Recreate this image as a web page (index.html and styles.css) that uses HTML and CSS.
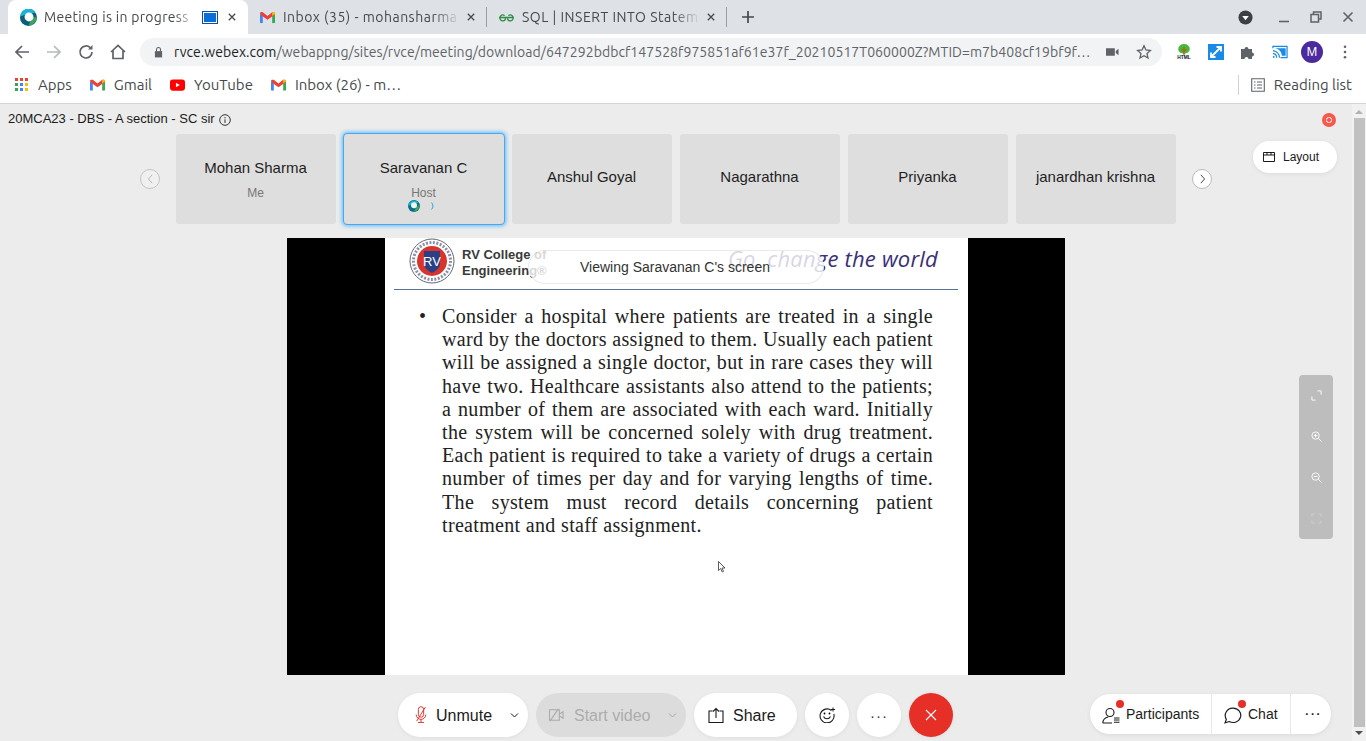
FILE: index.html
```html
<!DOCTYPE html>
<html lang="en">
<head>
  <meta charset="UTF-8" />
  <title>Meeting is in progress</title>
  <link rel="stylesheet" href="styles.css">
</head>
<body>
  <!-- browser chrome -->
  <div class="tabstrip">
    <div class="tab active">
      <svg class="favicon webex" viewBox="0 0 16 16"><circle cx="8" cy="8" r="8" fill="#0b5f7a"/><path d="M.5 7a7.5 7.5 0 0 1 14-3.500L8 4z" fill="#16b6dc"/><path d="M8 15.500A7.5 7.500 0 0 0 15.500 7L11 9z" fill="#3fa35a"/><circle cx="8.500" cy="7.500" r="4.200" fill="#fff"/></svg>
      <span class="tab-title">Meeting is in progress</span>
      <span class="cast-box"></span>
      <svg class="tab-close" viewBox="0 0 10 10"><path d="M1 1l8 8M9 1l-8 8"/></svg>
    </div>
    <div class="tab">
      <svg class="favicon" viewBox="0 0 16 12"><use href="#gmail"/></svg>
      <span class="tab-title">Inbox (35) - mohansharma</span>
      <svg class="tab-close" viewBox="0 0 10 10"><path d="M1 1l8 8M9 1l-8 8"/></svg>
    </div>
    <div class="tab-sep"></div>
    <div class="tab">
      <svg class="favicon" viewBox="0 0 16 10"><path d="M0 5h16M1 5a3 3 0 0 0 6 1M15 5a3 3 0 0 1-6 1M1 5a3 3 0 0 1 5-2M15 5a3 3 0 0 0-5-2" fill="none" stroke="#2f8d46" stroke-width="1.4"/></svg>
      <span class="tab-title">SQL | INSERT INTO Statem</span>
      <svg class="tab-close" viewBox="0 0 10 10"><path d="M1 1l8 8M9 1l-8 8"/></svg>
    </div>
    <div class="tab-sep"></div>
    <svg class="new-tab" viewBox="0 0 12 12"><path d="M6 0v12M0 6h12"/></svg>
    <div class="window-btns">
      <svg class="tabsearch" viewBox="0 0 16 16"><circle cx="8" cy="8" r="7.5" fill="#3c4043"/><path d="M4.5 6.5h7L8 11z" fill="#fff"/></svg>
      <svg class="winbtn" viewBox="0 0 12 12"><path d="M1 10.5h10" stroke-width="1.6"/></svg>
      <svg class="winbtn" viewBox="0 0 12 12"><path d="M3.5 3V1H11v7H8.500M1 3.500h7.500V11H1z" stroke-width="1.5"/></svg>
      <svg class="winbtn" viewBox="0 0 12 12"><path d="M1.500 1.500l9 9M10.500 1.500l-9 9" stroke-width="1.6"/></svg>
    </div>
  </div>

  <div class="toolbar">
    <svg class="nav-icon" viewBox="0 0 16 16"><path d="M15 8H2M8 2L2 8l6 6"/></svg>
    <svg class="nav-icon off" viewBox="0 0 16 16"><path d="M1 8h13M8 2l6 6-6 6"/></svg>
    <svg class="nav-icon" viewBox="0 0 16 16"><path d="M14 8a6 6 0 1 1-1.800-4.300"/><path d="M14.500 1v4.500H10" fill="#5f6368" stroke="none"/></svg>
    <svg class="nav-icon" viewBox="0 0 16 16"><path d="M1 8l7-6.500L15 8M3 6.500V14.500h10V6.500"/></svg>
    <div class="omnibox">
      <svg class="lock" viewBox="0 0 10 12"><path d="M1 5h8v7H1z" fill="#5f6368"/><path d="M2.800 5V3.200a2.200 2.200 0 0 1 4.400 0V5" fill="none" stroke="#5f6368" stroke-width="1.2"/></svg>
      <div class="url"><b>rvce.webex.com</b>/webappng/sites/rvce/meeting/download/647292bdbcf147528f975851af61e37f_20210517T060000Z?MTID=m7b408cf19bf9f…</div>
      <svg class="omni-cam" viewBox="0 0 14 10"><path d="M0 1h9.500v8H0zM10.500 4l3-2.500v7l-3-2.500z" fill="#5f6368"/></svg>
      <svg class="omni-star" viewBox="0 0 16 16"><path d="M8 1.800l1.900 4.200 4.500.5-3.400 3 1 4.500L8 11.700 4 14l1-4.500-3.400-3 4.500-.5z"/></svg>
    </div>
    <div class="ext-icons">
      <svg class="ext" viewBox="0 0 18 18"><ellipse cx="9" cy="5.500" rx="6.500" ry="5.500" fill="#47b83a"/><path d="M9 3v10M6 6l3 2 3-2" stroke="#a8641c" stroke-width="1.4" fill="none"/><text x="9" y="17" class="html-text" text-anchor="middle">HTML</text></svg>
      <svg class="ext" viewBox="0 0 16 16"><path d="M0 0h16v16H0z" fill="#1a8ae8"/><path d="M3 13L13 3M8.500 3H13v4.500M3 8.500V13h4.500" fill="none" stroke="#fff" stroke-width="1.8"/></svg>
      <svg class="ext" viewBox="0 0 16 16"><path d="M1 5h3.500a2 2 0 0 1 4 0H12v3.500a2 2 0 0 1 0 4V15H8.500a2 2 0 0 0-4 0H1z" fill="#5f6368"/></svg>
      <svg class="ext" viewBox="0 0 17 14"><path d="M1 3V1h15v12H9M1 5.500a8 8 0 0 1 7 7.500M1 8.500a4.800 4.800 0 0 1 4 4.500" fill="none" stroke="#1a8ae8" stroke-width="1.3"/><path d="M1 11a2 2 0 0 1 2 2H1zM3.500 3h11v8h-4a9 9 0 0 0-7-8z" fill="#1a8ae8"/></svg>
      <span class="avatar">M</span>
      <svg class="menu-dots" viewBox="0 0 4 16"><circle cx="2" cy="2" r="1.5"/><circle cx="2" cy="8" r="1.5"/><circle cx="2" cy="14" r="1.5"/></svg>
    </div>
  </div>

  <div class="bookmarks">
    <div class="bm">
      <svg class="bm-icon apps" viewBox="0 0 13 13"><path fill="#ea4335" d="M0 0h3v3H0zM5 0h3v3H5zM10 0h3v3h-3z"/><path fill="#34a853" d="M0 5h3v3H0zM0 10h3v3H0z"/><path fill="#4285f4" d="M5 5h3v3H5zM5 10h3v3H5z"/><path fill="#fbbc05" d="M10 5h3v3h-3zM10 10h3v3h-3z"/></svg>
      Apps
    </div>
    <div class="bm"><svg class="bm-icon" viewBox="0 0 16 12"><use href="#gmail"/></svg>Gmail</div>
    <div class="bm"><svg class="bm-icon" viewBox="0 0 16 12"><rect width="16" height="12" rx="3" fill="#f00"/><path d="M6.300 3.500v5L10.500 6z" fill="#fff"/></svg>YouTube</div>
    <div class="bm"><svg class="bm-icon" viewBox="0 0 16 12"><use href="#gmail"/></svg>Inbox (26) - m…</div>
    <div class="reading">
      <svg class="reading-icon" viewBox="0 0 14 14"><path d="M.7.700h12.600v12.600H.7zM3 4h1.500M6 4h5M3 7h1.500M6 7h5M3 10h1.500M6 10h5"/></svg>
      Reading list
    </div>
  </div>

  <!-- webex meeting -->
  <div class="viewport">
    <div class="meeting">
      <div class="meeting-title">20MCA23 - DBS - A section - SC sir
        <svg class="info" viewBox="0 0 12 12"><circle cx="6" cy="6" r="5.300"/><path d="M6 5.300V9M6 3v1.300"/></svg>
      </div>
      <span class="rec-dot"></span>

      <div class="strip">
        <span class="arrow off"><svg viewBox="0 0 8 12"><path d="M6 1L1.500 6 6 11"/></svg></span>
        <div class="tile"><span class="name">Mohan Sharma</span><span class="role">Me</span></div>
        <div class="tile host">
          <span class="name">Saravanan C</span><span class="role">Host</span>
          <span class="host-icons">
            <svg viewBox="0 0 12 12" width="12" height="12"><circle cx="6" cy="6" r="6" fill="#0a6f8c"/><path d="M.5 6a5.500 5.500 0 0 1 10-3L6 3z" fill="#17b4d6"/><path d="M6 11.500A5.500 5.500 0 0 0 11.500 5L8 7z" fill="#3fa35a"/><circle cx="6" cy="5.300" r="3" fill="#eef6ee"/></svg>
            <svg viewBox="0 0 3 8" width="3" height="8"><path d="M.5 .5a5 5 0 0 1 0 7" fill="none" stroke="#2aa6dc"/></svg>
          </span>
        </div>
        <div class="tile solo"><span class="name">Anshul Goyal</span></div>
        <div class="tile solo"><span class="name">Nagarathna</span></div>
        <div class="tile solo"><span class="name">Priyanka</span></div>
        <div class="tile solo"><span class="name">janardhan krishna</span></div>
        <span class="arrow"><svg viewBox="0 0 8 12"><path d="M2 1l4.500 5L2 11"/></svg></span>
      </div>

      <button class="layout-btn">
        <svg viewBox="0 0 12 10" width="12" height="10"><path d="M.5 .5h11v9H.5zM.5 3h11M4 .5V3M8 .5V3"/></svg>
        Layout
      </button>

      <div class="stage">
        <div class="slide">
          <div class="slide-head">
            <svg class="rv-logo" viewBox="0 0 46 46">
              <circle cx="23" cy="23" r="22" fill="#fff" stroke="#667" stroke-width="1"/>
              <circle cx="23" cy="23" r="18.500" fill="none" stroke="#8a8fa8" stroke-width="3" stroke-dasharray="2 1.500"/>
              <circle cx="23" cy="23" r="15" fill="#d9342b"/>
              <path d="M15 13h16v13c0 4-4 7-8 9-4-2-8-5-8-9z" fill="#2b3f86"/>
              <text x="23" y="28" class="rv-text" text-anchor="middle">RV</text>
            </svg>
            <div class="college">RV College of<br>Engineering®</div>
            <div class="motto">Go, change the world</div>
          </div>
          <div class="slide-body">
            <span class="bullet">•</span>
            <div class="para">
              <span>Consider a hospital where patients are treated in a single</span>
              <span>ward by the doctors assigned to them. Usually each patient</span>
              <span>will be assigned a single doctor, but in rare cases they will</span>
              <span>have two. Healthcare assistants also attend to the patients;</span>
              <span>a number of them are associated with each ward. Initially</span>
              <span>the system will be concerned solely with drug treatment.</span>
              <span>Each patient is required to take a variety of drugs a certain</span>
              <span>number of times per day and for varying lengths of time.</span>
              <span>The system must record details concerning patient</span>
              <span class="last">treatment and staff assignment.</span>
            </div>
          </div>
          <svg class="pointer" viewBox="0 0 8 12"><path d="M.5 .5v9l2.200-2 1.500 3.500 1.300-.6L4 7h3z" fill="#fff" stroke="#333" stroke-width=".8"/></svg>
        </div>
        <div class="viewing">Viewing Saravanan C's screen</div>
      </div>

      <div class="zoom-panel">
        <svg viewBox="0 0 12 12"><path d="M1 7v4h4M7 1h4v4"/></svg>
        <svg viewBox="0 0 12 12"><circle cx="5" cy="5" r="4"/><path d="M8 8l3.500 3.500M3 5h4M5 3v4"/></svg>
        <svg viewBox="0 0 12 12"><circle cx="5" cy="5" r="4"/><path d="M8 8l3.500 3.500M3 5h4"/></svg>
        <svg class="dim" viewBox="0 0 12 12"><path d="M1 4V1h3M8 1h3v3M11 8v3H8M4 11H1V8"/></svg>
      </div>

      <div class="controls">
        <button class="pill"><svg class="ico" viewBox="0 0 16 20"><path d="M5 3.500a3 3 0 0 1 6 0v6a3 3 0 0 1-6 0zM2.500 9.500a5.500 5.500 0 0 0 11 0M8 15v3M4.500 18.500h7M13 1L3 17" fill="none" stroke="#e4322b" stroke-width="1.1"/></svg><span class="lbl">Unmute</span><svg class="chev" viewBox="0 0 8 5"><path d="M.5 .5L4 4 7.500 .5"/></svg></button>
        <button class="pill disabled"><svg class="ico" viewBox="0 0 16 14"><path d="M.5 1.500H11v11H.5zM11 6l4-2.500v7L11 8M10 .5L1 13.500" fill="none" stroke="#a9a9a9" stroke-width="1.1"/></svg><span class="lbl">Start video</span><svg class="chev" viewBox="0 0 8 5"><path d="M.5 .5L4 4 7.500 .5"/></svg></button>
        <button class="pill share"><svg class="ico" viewBox="0 0 16 16"><path d="M4.500 4H1v11.500h14V4h-3.500M8 11V1.500M5 4.500l3-3 3 3" fill="none" stroke="#1b1b1b" stroke-width="1.1"/></svg><span class="lbl">Share</span></button>
        <button class="round"><svg class="ico" viewBox="0 0 16 16"><path d="M12.500 3.500A7 7 0 1 0 14.800 7" fill="none" stroke="#1b1b1b" stroke-width="1.1"/><path d="M4.500 9.500c1.500 3 5.500 3 7 0" fill="none" stroke="#1b1b1b" stroke-width="1.1"/><circle cx="5.500" cy="6.500" r=".9"/><circle cx="10.500" cy="6.500" r=".9"/><path d="M14 .5v4M12 2.500h4" stroke="#1b1b1b"/></svg></button>
        <button class="round dots">···</button>
        <button class="round leave"><svg viewBox="0 0 12 12"><path d="M1 1l10 10M11 1L1 11"/></svg></button>
      </div>

      <div class="side-controls">
        <div class="side-item">
          <span class="badge"></span>
          <svg class="ico" viewBox="0 0 18 16"><circle cx="8" cy="5" r="4" fill="none" stroke="#1b1b1b" stroke-width="1.1"/><path d="M.7 15.500c.3-3.500 3-5.500 5.500-6M10 15.500H.7M12 10.500h5.500M12 12.500h5.500M12 14.800h5.500" fill="none" stroke="#1b1b1b" stroke-width="1.1"/></svg>
          Participants
        </div>
        <div class="side-item">
          <span class="badge"></span>
          <svg class="ico" viewBox="0 0 17 16"><path d="M8.500 1a7.300 6.800 0 1 1-3.600 12.700L1 15l1.200-3.400A7 7 0 0 1 8.500 1z" fill="none" stroke="#1b1b1b" stroke-width="1.1"/></svg>
          Chat
        </div>
        <div class="side-item more">···</div>
      </div>
    </div>

    <div class="scrollbar">
      <span class="sb-up"></span>
      <div class="sb-thumb"></div>
      <span class="sb-down"></span>
    </div>
  </div>

  <svg width="0" height="0" class="defs">
    <symbol id="gmail" viewBox="0 0 16 12">
      <path d="M0 2.500h3V12H1a1 1 0 0 1-1-1z" fill="#4285f4"/>
      <path d="M13 2.500h3V11a1 1 0 0 1-1 1h-2z" fill="#34a853"/>
      <path d="M0 2c0-2 2-2.500 3-1.500L8 4.500 13 .5c1-1 3-.5 3 1.500L13 5 8 8.500 3 5z" fill="#ea4335"/>
      <path d="M13 .5c1-1 3-.5 3 1.500l-3 2.500z" fill="#fbbc05"/>
    </symbol>
  </svg>
</body>
</html>
```
FILE: styles.css
```css
* {
  box-sizing: border-box;
}
html, body {
  height: 100%;
}
body {
  margin: 0;
  height: 741px;
  overflow: hidden;
  font-family: "Liberation Sans", Arial, sans-serif;
  background: #ececec;
  color: #1b1b1b;
}
button {
  font-family: inherit;
  border: none;
}
.defs {
  position: absolute;
}

/* tab strip */
.tabstrip {
  display: flex;
  align-items: flex-end;
  height: 34px;
  background: #dee1e6;
  padding-left: 8px;
  font-family: Ubuntu, "Noto Sans", sans-serif;
}
.tab {
  display: flex;
  align-items: center;
  width: 238px;
  height: 34px;
  padding: 0 11px 0 12px;
  font-size: 14px;
  color: #45494d;
}
.tab-sep + .tab {
  width: 239px;
}
.tab.active {
  width: 240px;
  background: #fff;
  border-radius: 8px 8px 0 0;
  padding: 0 12px;
}
.tab-title {
  flex: 1;
  min-width: 0;
  white-space: nowrap;
  overflow: hidden;
  letter-spacing: 0.5px;
  -webkit-mask-image: linear-gradient(to right, #000 85%, transparent);
  mask-image: linear-gradient(to right, #000 85%, transparent);
}
.tab.active .tab-title {
  letter-spacing: 0.3px;
}
.favicon {
  width: 15px;
  height: 15px;
  flex: none;
  margin-right: 8px;
}
.favicon.webex {
  width: 17px;
  height: 17px;
  margin-right: 7px;
}
.cast-box {
  flex: none;
  width: 16px;
  height: 13px;
  margin: 0 3px 0 5px;
  background: #0b6ed8;
  border: 1px solid #0b4fa8;
  box-shadow: inset 0 0 0 1px #fff;
}
.tab-close {
  flex: none;
  width: 8px;
  height: 8px;
  margin-left: 7px;
  fill: none;
  stroke: #45494d;
  stroke-width: 1.6;
}
.tab-sep {
  width: 1px;
  height: 20px;
  background: #9aa0a6;
  margin-bottom: 7px;
  flex: none;
}
.new-tab {
  width: 12px;
  height: 12px;
  margin: 0 0 11px 15px;
  fill: none;
  stroke: #45494d;
  stroke-width: 1.7;
  flex: none;
}
.window-btns {
  margin-left: auto;
  display: flex;
  align-items: center;
  height: 34px;
  padding-right: 12px;
  gap: 20px;
}
.tabsearch {
  width: 15px;
  height: 15px;
  margin-right: 5px;
}
.winbtn {
  width: 12px;
  height: 12px;
  fill: none;
  stroke: #5f6368;
}

/* toolbar */
.toolbar {
  display: flex;
  align-items: center;
  height: 35px;
  background: #fff;
  padding-left: 14px;
}
.nav-icon {
  width: 16px;
  height: 16px;
  margin-right: 16px;
  fill: none;
  stroke: #5f6368;
  stroke-width: 1.7;
  flex: none;
}
.nav-icon.off {
  stroke: #b6b9bd;
}
.omnibox {
  display: flex;
  align-items: center;
  width: 1022px;
  height: 28px;
  margin-left: -2px;
  background: #f1f3f4;
  border-radius: 14px;
  padding: 0 10px 0 14px;
  flex: none;
}
.lock {
  width: 9px;
  height: 12px;
  flex: none;
  margin-right: 11px;
}
.url {
  flex: 1;
  min-width: 0;
  white-space: nowrap;
  overflow: hidden;
  font-family: Ubuntu, "Noto Sans", sans-serif;
  font-size: 14px;
  letter-spacing: 0.055px;
  color: #5f6368;
}
.url b {
  font-weight: 400;
  color: #202124;
}
.omni-cam {
  width: 13px;
  height: 10px;
  flex: none;
  margin: 0 17px 0 15px;
}
.omni-star {
  width: 16px;
  height: 16px;
  fill: none;
  stroke: #5f6368;
  stroke-width: 1.3;
  flex: none;
}
.ext-icons {
  display: flex;
  align-items: center;
  margin-left: 14px;
}
.ext {
  width: 16px;
  height: 16px;
  margin-right: 16px;
  flex: none;
}
.html-text {
  font-family: "Liberation Sans", sans-serif;
  font-size: 5.5px;
  font-weight: 700;
  fill: #111;
}
.avatar {
  width: 22px;
  height: 22px;
  border-radius: 50%;
  background: #4a2a9e;
  color: #fff;
  font-size: 12px;
  font-family: "Noto Sans", sans-serif;
  display: flex;
  align-items: center;
  justify-content: center;
  margin-left: -3px;
}
.menu-dots {
  width: 4px;
  height: 14px;
  fill: #5f6368;
  margin-left: 20px;
}

/* bookmarks */
.bookmarks {
  display: flex;
  align-items: center;
  height: 35px;
  background: #fff;
  border-bottom: 1px solid #d5d5d5;
  padding: 0 0 3px 15px;
  font-family: Ubuntu, "Noto Sans", sans-serif;
  font-size: 15px;
  color: #45494d;
}
.bm {
  display: flex;
  align-items: center;
  margin-right: 18px;
}
.bm-icon {
  width: 15px;
  height: 12px;
  margin-right: 9px;
  flex: none;
}
.bm-icon.apps {
  width: 13px;
  height: 13px;
  margin-right: 10px;
}
.reading {
  margin-left: auto;
  display: flex;
  align-items: center;
  height: 20px;
  border-left: 1px solid #cfd1d4;
  padding: 0 14px 0 12px;
}
.reading-icon {
  width: 14px;
  height: 14px;
  margin-right: 9px;
  fill: none;
  stroke: #5f6368;
  stroke-width: 1.1;
}

/* meeting area */
.viewport {
  display: flex;
  height: 637px;
}
.meeting {
  position: relative;
  flex: 1;
  min-width: 0;
}
.meeting-title {
  display: flex;
  align-items: center;
  height: 28px;
  padding: 1px 0 0 8px;
  font-size: 13px;
  gap: 4px;
}
.info {
  width: 12px;
  height: 12px;
  margin-top: 2px;
  fill: none;
  stroke: #333;
}
.rec-dot {
  position: absolute;
  top: 9px;
  left: 1322px;
  width: 14px;
  height: 14px;
  border-radius: 50%;
  background: #f9574b radial-gradient(circle, transparent 2px, #ffc7c2 2px, #ffc7c2 3px, transparent 3px);
}
.strip {
  display: flex;
  align-items: center;
  height: 92px;
  margin-top: 1px;
  padding-left: 140px;
}
.tile {
  width: 160px;
  height: 90px;
  margin-right: 8px;
  padding-right: 1px;
  flex: none;
  background: #dedede;
  border-radius: 3px;
  display: flex;
  flex-direction: column;
  align-items: center;
  justify-content: center;
  position: relative;
}
.tile.solo {
  padding-bottom: 6px;
}
.name {
  font-size: 15px;
  color: #1f1f1f;
}
.role {
  font-size: 12px;
  color: #777;
  margin-top: 10px;
}
.tile.host {
  height: 92px;
  width: 162px;
  margin-left: -1px;
  margin-right: 7px;
  padding-bottom: 8px;
  border: 1px solid #45a8f0;
  border-radius: 4px;
  box-shadow: 0 0 4px 1px #63b9f5;
}
.tile.host .name {
  margin-top: 20px;
}
.host-icons {
  display: flex;
  align-items: center;
  gap: 11px;
  height: 12px;
  margin-right: 6px;
}
.arrow {
  width: 20px;
  height: 20px;
  flex: none;
  border-radius: 50%;
  border: 1px solid #c4c4c4;
  background: #f0f0f0;
  display: flex;
  align-items: center;
  justify-content: center;
  margin-right: 16px;
}
.tile + .arrow {
  margin: 0 0 0 8px;
  background: #fff;
  border-color: #bbb;
}
.arrow svg {
  width: 7px;
  height: 10px;
  fill: none;
  stroke: #222;
}
.arrow.off svg {
  stroke: #aaa;
}
.layout-btn {
  position: absolute;
  left: 1253px;
  top: 37px;
  width: 84px;
  height: 32px;
  border-radius: 16px;
  background: #fff;
  box-shadow: 0 1px 4px rgba(0,0,0,0.08);
  font-size: 12px;
  color: #1b1b1b;
  display: flex;
  align-items: center;
  padding: 0 0 0 10px;
  gap: 8px;
}
.layout-btn svg {
  fill: none;
  stroke: #1b1b1b;
}

/* shared screen */
.stage {
  position: relative;
  width: 778px;
  height: 437px;
  margin: 13px 0 0 287px;
  background: #000;
  display: flex;
  justify-content: center;
}
.slide {
  position: relative;
  width: 583px;
  margin-left: 1px;
  background: #fff;
  height: 100%;
}
.slide-head {
  display: flex;
  align-items: center;
  height: 52px;
  margin: 0 10px 0 9px;
  padding: 0 20px 3px 15px;
  border-bottom: 1px solid #5b6f9c;
}
.rv-logo {
  width: 46px;
  height: 46px;
  flex: none;
  margin: -3px 7px 0 0;
}
.rv-text {
  font-family: "Liberation Sans", sans-serif;
  font-size: 13px;
  fill: #fff;
}
.college {
  font-size: 13px;
  font-weight: 700;
  line-height: 16px;
  padding-top: 2px;
  color: #3a3a3a;
}
.motto {
  margin: -8px 0 0 auto;
  font-family: "Open Sans", sans-serif;
  font-style: italic;
  font-size: 22px;
  color: #3a2f78;
  letter-spacing: 0.2px;
}
.slide-body {
  display: flex;
  padding: 15px 35px 0 34px;
  font-family: "Liberation Serif", serif;
  font-size: 20px;
  letter-spacing: 0.33px;
  line-height: 23.2px;
  color: #222;
}
.bullet {
  width: 23px;
  flex: none;
}
.para {
  flex: 1;
  min-width: 0;
}
.para span {
  display: block;
  white-space: nowrap;
  text-align: justify;
  text-align-last: justify;
}
.para span.last {
  text-align-last: left;
}
.pointer {
  position: absolute;
  left: 333px;
  top: 323px;
  width: 8px;
  height: 12px;
}
.viewing {
  position: absolute;
  left: 241px;
  top: 12px;
  width: 296px;
  height: 34px;
  padding-right: 2px;
  border-radius: 17px;
  border: 1px solid rgba(225,225,225,0.7);
  background: rgba(255,255,255,0.8);
  font-size: 14px;
  color: #333;
  display: flex;
  align-items: center;
  justify-content: center;
}
.zoom-panel {
  position: absolute;
  left: 1299px;
  top: 271px;
  width: 34px;
  height: 164px;
  border-radius: 4px;
  background: #bdbdbd;
  display: flex;
  flex-direction: column;
  align-items: center;
  justify-content: space-between;
  padding: 15px 0;
}
.zoom-panel svg {
  width: 11px;
  height: 11px;
  fill: none;
  stroke: #fff;
  stroke-width: 1;
}
.zoom-panel svg.dim {
  stroke: #d0d0d0;
}

/* bottom controls */
.controls {
  position: absolute;
  left: 398px;
  top: 589px;
  display: flex;
  gap: 8px;
}
.pill {
  display: flex;
  align-items: center;
  height: 44px;
  border-radius: 22px;
  background: #fff;
  padding: 0 9px 0 16px;
  font-size: 16px;
  color: #1b1b1b;
  box-shadow: 0 1px 4px rgba(0,0,0,0.06);
  width: 130px;
}
.pill .ico {
  width: 14px;
  height: 18px;
  margin-right: 8px;
  flex: none;
}
.pill .lbl {
  flex: 1;
  padding-top: 2px;
  text-align: left;
}
.chev {
  width: 9px;
  height: 5px;
  fill: none;
  stroke: #1b1b1b;
}
.pill.disabled {
  width: 150px;
  background: #dcdcdc;
  color: #acacac;
  box-shadow: none;
  padding-left: 13px;
}
.pill.disabled .ico {
  width: 15px;
  margin-right: 10px;
}
.pill.disabled .chev {
  stroke: #a8a8a8;
}
.pill.share {
  width: 103px;
  padding-left: 14px;
}
.pill.share .ico {
  width: 16px;
  margin-right: 9px;
}
.round {
  width: 44px;
  height: 44px;
  border-radius: 50%;
  background: #fff;
  padding: 0;
  display: flex;
  align-items: center;
  justify-content: center;
  box-shadow: 0 1px 4px rgba(0,0,0,0.06);
}
.round .ico {
  width: 16px;
  height: 16px;
}
.round.dots {
  font-size: 15px;
  letter-spacing: 1px;
  color: #333;
}
.round.leave {
  background: #e62f27;
}
.round.leave svg {
  width: 12px;
  height: 12px;
  fill: none;
  stroke: #fff;
  stroke-width: 1.1;
}
.side-controls {
  position: absolute;
  left: 1090px;
  top: 590px;
  display: flex;
  height: 40px;
  width: 241px;
  background: #fff;
  border-radius: 20px;
  box-shadow: 0 1px 4px rgba(0,0,0,0.08);
  font-size: 14px;
}
.side-item {
  position: relative;
  display: flex;
  align-items: center;
  gap: 6px;
  height: 100%;
  padding-left: 12px;
  width: 122px;
  border-right: 1px solid #e8e8e8;
}
.side-item .ico {
  width: 18px;
  height: 17px;
  margin-top: 3px;
  flex: none;
}
.side-item + .side-item {
  width: 79px;
}
.side-item.more {
  flex: 1;
  border: none;
  font-size: 17px;
  padding-left: 13px;
}
.badge {
  position: absolute;
  left: 26px;
  top: 6px;
  width: 8px;
  height: 8px;
  border-radius: 50%;
  background: #e62f27;
}

/* scrollbar */
.scrollbar {
  width: 14px;
  flex: none;
  display: flex;
  flex-direction: column;
  align-items: center;
  background: #f1f1f1;
}
.sb-up, .sb-down {
  width: 0;
  height: 0;
  flex: none;
  border-left: 4px solid transparent;
  border-right: 4px solid transparent;
}
.sb-up {
  margin: 6px 0 4px;
  border-bottom: 4px solid #b2b2b2;
}
.sb-down {
  margin: 4px 0 6px;
  border-top: 4px solid #505050;
}
.sb-thumb {
  flex: 1;
  width: 11px;
  background: #c1c1c1;
}
```
